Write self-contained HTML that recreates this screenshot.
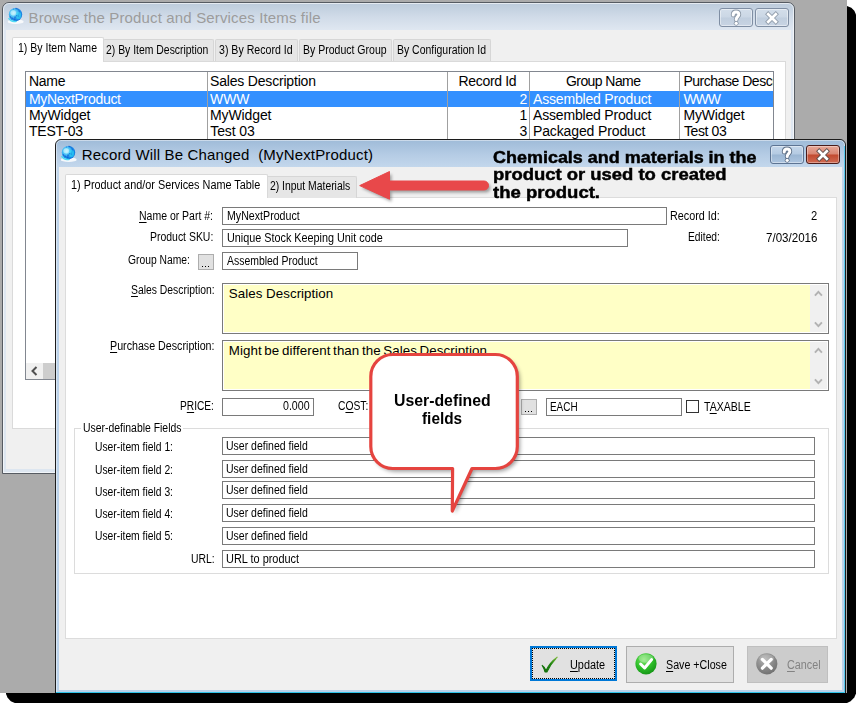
<!DOCTYPE html>
<html>
<head>
<meta charset="utf-8">
<title>Record Will Be Changed</title>
<style>
html,body{margin:0;padding:0;}
body{width:862px;height:709px;overflow:hidden;background:#fff;position:relative;font-family:"Liberation Sans",sans-serif;font-size:11px;color:#000;}
#shadow,#desk,#desk div,#desk svg{position:absolute;box-sizing:border-box;}
#shadow{left:6px;top:6px;width:850px;height:697px;background:#000;clip-path:polygon(0 0,841px 0,845.3px 1.8px,848.3px 4.8px,850px 8.6px,850px 687.5px,848.3px 691.6px,844.6px 695.3px,841px 697px,8.8px 697px,4.8px 695.2px,1.6px 691.8px,0 688px);}
#desk{left:0;top:0;width:847px;height:693px;background:#ababab;overflow:hidden;}
.t{white-space:nowrap;}
.t u{text-decoration:underline;text-underline-offset:1.6px;text-decoration-thickness:1px;}
.tab{background:#e6e6e6;border:1px solid #d6d6d6;border-bottom:none;border-radius:2px 2px 0 0;}
.tab.sel{background:#fff;border-color:#d9d9d9;}
.inp{background:#fff;border:1px solid #7a7a7a;}
.ta{background:#ffffc6;border:1px solid #7a7a7a;box-shadow:inset 0 0 0 1px #fff;}
.dots{background:#e1e1e1;border:1px solid #adadad;}
.btn{background:#e1e1e1;border:1px solid #adadad;}
</style>
</head>
<body>
<div id="shadow"></div>
<div id="desk">

<!-- ===== back window frame ===== -->
<div style="left:2px;top:2px;width:793px;height:472px;border:1px solid #565b62;border-radius:7px 7px 0 0;background:linear-gradient(#bccbdb 0,#d0dbe8 14px,#dfe7f1 27px,#dde6f0 100%);"></div>
<div style="left:3px;top:3px;width:791px;height:470px;border:1px solid rgba(255,255,255,.6);border-radius:6px 6px 0 0;"></div>
<div style="left:6px;top:30px;width:785px;height:439px;background:#f0f0f0;"></div>
<!-- caption buttons (inactive) -->
<div style="left:719px;top:8px;width:34px;height:19px;border:1px solid #7f8ea3;border-radius:3px;background:linear-gradient(#d3deea 0,#cbd7e5 48%,#c0cede 52%,#c8d4e3 100%);box-shadow:inset 0 0 0 1px rgba(255,255,255,.45);"></div>
<div style="left:755px;top:8px;width:34px;height:19px;border:1px solid #7f8ea3;border-radius:3px;background:linear-gradient(#d3deea 0,#cbd7e5 48%,#c0cede 52%,#c8d4e3 100%);box-shadow:inset 0 0 0 1px rgba(255,255,255,.45);"></div>
<svg style="left:6px;top:6px;opacity:0.95" width="20" height="20" viewBox="0 0 20 20">
<defs><radialGradient id="gb" cx="0.36" cy="0.38" r="0.75"><stop offset="0" stop-color="#b8f2ff"/><stop offset="0.35" stop-color="#4cc4f6"/><stop offset="0.7" stop-color="#168cea"/><stop offset="1" stop-color="#0c62d0"/></radialGradient></defs>
<ellipse cx="9.7" cy="15.7" rx="8" ry="2.3" fill="#fff" opacity="0.85"/>
<circle cx="9.5" cy="8.6" r="6.7" fill="url(#gb)"/>
<path d="M9.5 2.2 C13 3 14.5 5.5 13 8 C12 10 10 10 9 12 C8.5 13.5 9.5 14.6 11 15" fill="none" stroke="#0a5ad0" stroke-width="1.3" opacity="0.55"/>
<path d="M4 11 C6 12.5 7.5 13.5 9 13" fill="none" stroke="#0a5ad0" stroke-width="1.2" opacity="0.5"/>
<ellipse cx="12.6" cy="9.6" rx="2.6" ry="3.6" fill="#2fe0f6" opacity="0.55"/>
<ellipse cx="7.2" cy="6.8" rx="2.8" ry="2.6" fill="#d8faff" opacity="0.55"/>
<path d="M2.6 12.2 C4.2 15 7.5 16 10.5 15.2" fill="none" stroke="#38d8f4" stroke-width="1.4" opacity="0.9"/>
<g fill="#0a4ed0" opacity="0.6"><circle cx="4.3" cy="10.7" r="0.6"/><circle cx="6.3" cy="12.2" r="0.65"/><circle cx="8.5" cy="11.1" r="0.6"/><circle cx="10.5" cy="9.5" r="0.6"/><circle cx="12.3" cy="10.1" r="0.55"/><circle cx="8.3" cy="13.5" r="0.55"/><circle cx="7.4" cy="3.0" r="0.6"/><circle cx="10.2" cy="2.7" r="0.6"/></g>
</svg><svg style="left:728px;top:8.5px;" width="16" height="18" viewBox="0 0 16 18">
<path d="M5.2 6.0 C5.2 3.9 6.4 3.0 8.0 3.0 C9.7 3.0 10.8 4.0 10.8 5.5 C10.8 7.5 8.2 7.9 8.2 10.6" fill="none" stroke="#8d99a8" stroke-width="4.8" stroke-linecap="round"/>
<circle cx="8.2" cy="14.3" r="2.4" fill="#8d99a8"/>
<path d="M5.2 6.0 C5.2 3.9 6.4 3.0 8.0 3.0 C9.7 3.0 10.8 4.0 10.8 5.5 C10.8 7.5 8.2 7.9 8.2 10.6" fill="none" stroke="#fff" stroke-width="3.0" stroke-linecap="round"/>
<circle cx="8.2" cy="14.3" r="1.6" fill="#fff"/>
</svg><svg style="left:763px;top:9.5px;" width="18" height="16" viewBox="0 0 18 16">
<path d="M5.2 4.2 L12.8 11.8 M12.8 4.2 L5.2 11.8" fill="none" stroke="#8d99a8" stroke-width="4.4" stroke-linecap="square"/>
<path d="M5.2 4.2 L12.8 11.8 M12.8 4.2 L5.2 11.8" fill="none" stroke="#fff" stroke-width="2.7" stroke-linecap="square"/>
</svg>

<!-- back window tab page -->
<div style="left:12px;top:61px;width:774px;height:368px;background:#fff;border:1px solid #dadada;"></div>
<div class="tab" style="left:103px;top:39px;width:111px;height:22px;"></div>
<div class="tab" style="left:215px;top:39px;width:83px;height:22px;"></div>
<div class="tab" style="left:299px;top:39px;width:93px;height:22px;"></div>
<div class="tab" style="left:393px;top:39px;width:98px;height:22px;"></div>
<div class="tab sel" style="left:12px;top:37px;width:92px;height:25px;"></div>
<div style="left:13px;top:61px;width:90px;height:2px;background:#fff;"></div>

<!-- list -->
<div style="left:25px;top:71px;width:749px;height:309px;background:#fff;border:1px solid #828790;"></div>
<div style="left:26px;top:91px;width:747px;height:16px;background:#3390ff;"></div>
<div style="left:207px;top:72px;width:1px;height:290px;background:#a0a0a0;"></div>
<div style="left:447px;top:72px;width:1px;height:290px;background:#a0a0a0;"></div>
<div style="left:529px;top:72px;width:1px;height:290px;background:#a0a0a0;"></div>
<div style="left:679px;top:72px;width:1px;height:290px;background:#a0a0a0;"></div>
<!-- hscroll -->
<div style="left:26px;top:363px;width:747px;height:16px;background:#f0f0f0;"></div>
<div style="left:43px;top:363px;width:400px;height:16px;background:#cdcdcd;"></div>
<svg style="left:26px;top:362px;" width="17" height="17" viewBox="0 0 17 17"><path d="M10.5 5 L6.5 9 L10.5 13" fill="none" stroke="#505050" stroke-width="2"/></svg>

<div class="t" style="left:28.50px;top:10.30px;font-size:15px;line-height:15px;letter-spacing:0.147px;color:#9c9c9c">Browse the Product and Services Items file</div>
<div class="t" style="left:17.50px;top:41.84px;font-size:12px;line-height:12px;transform:scaleX(0.8775);transform-origin:0 0">1) By Item Name</div>
<div class="t" style="left:106.20px;top:43.84px;font-size:12px;line-height:12px;transform:scaleX(0.8675);transform-origin:0 0">2) By Item Description</div>
<div class="t" style="left:219.40px;top:43.84px;font-size:12px;line-height:12px;transform:scaleX(0.8828);transform-origin:0 0">3) By Record Id</div>
<div class="t" style="left:303.40px;top:43.84px;font-size:12px;line-height:12px;transform:scaleX(0.8764);transform-origin:0 0">By Product Group</div>
<div class="t" style="left:397.40px;top:43.84px;font-size:12px;line-height:12px;transform:scaleX(0.8720);transform-origin:0 0">By Configuration Id</div>
<div class="t" style="left:29.00px;top:73.85px;font-size:14px;line-height:14px;letter-spacing:-0.286px">Name</div>
<div class="t" style="left:210.00px;top:73.85px;font-size:14px;line-height:14px;letter-spacing:-0.184px">Sales Description</div>
<div class="t" style="left:458.60px;top:73.85px;font-size:14px;line-height:14px;letter-spacing:-0.350px">Record Id</div>
<div class="t" style="left:566.00px;top:73.85px;font-size:14px;line-height:14px;letter-spacing:-0.573px">Group Name</div>
<div class="t" style="left:683.40px;top:73.85px;font-size:14px;line-height:14px;letter-spacing:-0.469px;width:89.6px;overflow:hidden">Purchase Descr</div>
<div class="t" style="left:29.00px;top:91.95px;font-size:14px;line-height:14px;letter-spacing:-0.309px;color:#fff">MyNextProduct</div>
<div class="t" style="left:210.00px;top:91.95px;font-size:14px;line-height:14px;letter-spacing:-0.078px;color:#fff">WWW</div>
<div class="t" style="left:519.50px;top:91.95px;font-size:14px;line-height:14px;color:#fff">2</div>
<div class="t" style="left:533.00px;top:91.95px;font-size:14px;line-height:14px;letter-spacing:-0.182px;color:#fff">Assembled Product</div>
<div class="t" style="left:683.40px;top:91.95px;font-size:14px;line-height:14px;letter-spacing:-1.028px;color:#fff">WWW</div>
<div class="t" style="left:29.00px;top:107.95px;font-size:14px;line-height:14px;letter-spacing:-0.105px">MyWidget</div>
<div class="t" style="left:210.00px;top:107.95px;font-size:14px;line-height:14px;letter-spacing:-0.105px">MyWidget</div>
<div class="t" style="left:519.50px;top:107.95px;font-size:14px;line-height:14px">1</div>
<div class="t" style="left:533.00px;top:107.95px;font-size:14px;line-height:14px;letter-spacing:-0.182px">Assembled Product</div>
<div class="t" style="left:683.40px;top:107.95px;font-size:14px;line-height:14px;letter-spacing:-0.148px">MyWidget</div>
<div class="t" style="left:29.00px;top:123.95px;font-size:14px;line-height:14px;letter-spacing:-0.208px">TEST-03</div>
<div class="t" style="left:210.30px;top:123.95px;font-size:14px;line-height:14px;letter-spacing:-0.123px">Test 03</div>
<div class="t" style="left:519.50px;top:123.95px;font-size:14px;line-height:14px">3</div>
<div class="t" style="left:533.00px;top:123.95px;font-size:14px;line-height:14px;letter-spacing:-0.127px">Packaged Product</div>
<div class="t" style="left:684.00px;top:123.95px;font-size:14px;line-height:14px;letter-spacing:-0.390px">Test 03</div>

<!-- ===== front window frame ===== -->
<div style="left:55px;top:139px;width:791px;height:560px;border:1px solid #1c1c1c;border-radius:6px 6px 0 0;background:linear-gradient(#9fbbd8 0,#b4cbe4 14px,#c3d7ec 27px,#bdd3ea 60px,#bbd2ea 100%);"></div>
<div style="left:56px;top:140px;width:789px;height:558px;border:1px solid rgba(255,255,255,.45);border-radius:5px 5px 0 0;"></div>
<div style="left:59px;top:167px;width:783px;height:523px;background:#f0f0f0;"></div>
<div style="left:56px;top:692px;width:789px;height:1px;background:#2fc4ea;"></div>

<div style="left:844px;top:146px;width:1px;height:547px;background:#56c8ee;"></div>
<!-- caption buttons (active) -->
<div style="left:770px;top:145px;width:34px;height:19px;border:1px solid #5d7493;border-radius:3px;background:linear-gradient(#c4d6ea 0,#b4cae2 48%,#9bb6d3 52%,#adc5df 100%);box-shadow:inset 0 0 0 1px rgba(255,255,255,.4);"></div>
<div style="left:806px;top:145px;width:34px;height:19px;border:1px solid #4a1c1a;border-radius:3px;background:linear-gradient(#e7a898 0,#d98672 48%,#c24a2f 52%,#cf6a52 100%);box-shadow:inset 0 0 0 1px rgba(255,255,255,.35);"></div>
<svg style="left:59px;top:144px;opacity:1.0" width="20" height="20" viewBox="0 0 20 20">
<defs><radialGradient id="gf" cx="0.36" cy="0.38" r="0.75"><stop offset="0" stop-color="#b8f2ff"/><stop offset="0.35" stop-color="#4cc4f6"/><stop offset="0.7" stop-color="#168cea"/><stop offset="1" stop-color="#0c62d0"/></radialGradient></defs>
<ellipse cx="9.7" cy="15.7" rx="8" ry="2.3" fill="#fff" opacity="0.85"/>
<circle cx="9.5" cy="8.6" r="6.7" fill="url(#gf)"/>
<path d="M9.5 2.2 C13 3 14.5 5.5 13 8 C12 10 10 10 9 12 C8.5 13.5 9.5 14.6 11 15" fill="none" stroke="#0a5ad0" stroke-width="1.3" opacity="0.55"/>
<path d="M4 11 C6 12.5 7.5 13.5 9 13" fill="none" stroke="#0a5ad0" stroke-width="1.2" opacity="0.5"/>
<ellipse cx="12.6" cy="9.6" rx="2.6" ry="3.6" fill="#2fe0f6" opacity="0.55"/>
<ellipse cx="7.2" cy="6.8" rx="2.8" ry="2.6" fill="#d8faff" opacity="0.55"/>
<path d="M2.6 12.2 C4.2 15 7.5 16 10.5 15.2" fill="none" stroke="#38d8f4" stroke-width="1.4" opacity="0.9"/>
<g fill="#0a4ed0" opacity="0.6"><circle cx="4.3" cy="10.7" r="0.6"/><circle cx="6.3" cy="12.2" r="0.65"/><circle cx="8.5" cy="11.1" r="0.6"/><circle cx="10.5" cy="9.5" r="0.6"/><circle cx="12.3" cy="10.1" r="0.55"/><circle cx="8.3" cy="13.5" r="0.55"/><circle cx="7.4" cy="3.0" r="0.6"/><circle cx="10.2" cy="2.7" r="0.6"/></g>
</svg><svg style="left:778.6px;top:145.7px;" width="16" height="18" viewBox="0 0 16 18">
<path d="M5.2 6.0 C5.2 3.9 6.4 3.0 8.0 3.0 C9.7 3.0 10.8 4.0 10.8 5.5 C10.8 7.5 8.2 7.9 8.2 10.6" fill="none" stroke="#5d6f86" stroke-width="4.8" stroke-linecap="round"/>
<circle cx="8.2" cy="14.3" r="2.4" fill="#5d6f86"/>
<path d="M5.2 6.0 C5.2 3.9 6.4 3.0 8.0 3.0 C9.7 3.0 10.8 4.0 10.8 5.5 C10.8 7.5 8.2 7.9 8.2 10.6" fill="none" stroke="#fff" stroke-width="3.0" stroke-linecap="round"/>
<circle cx="8.2" cy="14.3" r="1.6" fill="#fff"/>
</svg><svg style="left:813.8px;top:146.6px;" width="18" height="16" viewBox="0 0 18 16">
<path d="M5.2 4.2 L12.8 11.8 M12.8 4.2 L5.2 11.8" fill="none" stroke="#5a4a48" stroke-width="4.4" stroke-linecap="square"/>
<path d="M5.2 4.2 L12.8 11.8 M12.8 4.2 L5.2 11.8" fill="none" stroke="#fff" stroke-width="2.7" stroke-linecap="square"/>
</svg>

<!-- front tab page -->
<div style="left:65px;top:197px;width:772px;height:442px;background:#fff;border:1px solid #dcdcdc;"></div>
<div class="tab" style="left:266px;top:176px;width:91px;height:22px;"></div>
<div class="tab sel" style="left:65px;top:174px;width:203px;height:24px;"></div>
<div style="left:66px;top:197px;width:201px;height:2px;background:#fff;"></div>

<!-- inputs -->
<div class="inp" style="left:222px;top:207px;width:445px;height:18px;"></div>
<div class="inp" style="left:222px;top:229px;width:406px;height:18px;"></div>
<div class="inp" style="left:222px;top:252px;width:136px;height:18px;"></div>
<div class="dots" style="left:198px;top:254px;width:16px;height:16px;"></div>
<div style="left:202px;top:266px;width:1px;height:1px;background:#000;box-shadow:3px 0 0 #000,6px 0 0 #000;"></div>
<div class="ta" style="left:222px;top:283px;width:607px;height:51px;"></div>
<div class="ta" style="left:222px;top:340px;width:607px;height:51px;"></div>
<div style="left:810px;top:285px;width:17px;height:47px;background:#f0f0f0;"></div>
<div style="left:810px;top:342px;width:17px;height:47px;background:#f0f0f0;"></div>
<svg style="left:810px;top:285px;" width="17" height="47" viewBox="0 0 17 47"><path d="M4.9 10.7 L8.4 6.9 L11.9 10.7 M4.9 37.3 L8.4 41.1 L11.9 37.3" fill="none" stroke="#b2b2b2" stroke-width="1.9"/></svg>
<svg style="left:810px;top:342px;" width="17" height="47" viewBox="0 0 17 47"><path d="M4.9 10.7 L8.4 6.9 L11.9 10.7 M4.9 37.3 L8.4 41.1 L11.9 37.3" fill="none" stroke="#b2b2b2" stroke-width="1.9"/></svg>
<div class="inp" style="left:222px;top:398px;width:92px;height:18px;"></div>
<div class="dots" style="left:521px;top:399px;width:16px;height:16px;"></div>
<div style="left:525px;top:411px;width:1px;height:1px;background:#000;box-shadow:3px 0 0 #000,6px 0 0 #000;"></div>
<div class="inp" style="left:546px;top:398px;width:136px;height:18px;"></div>
<div style="left:686px;top:400px;width:13px;height:13px;background:#fff;border:1px solid #333;"></div>
<!-- groupbox -->
<div style="left:74px;top:428px;width:755px;height:146px;border:1px solid #dcdcdc;"></div>
<div style="left:81px;top:424px;width:102px;height:10px;background:#fff;"></div>
<div class="inp" style="left:222px;top:437px;width:593px;height:18px;"></div>
<div class="inp" style="left:222px;top:460px;width:593px;height:18px;"></div>
<div class="inp" style="left:222px;top:481px;width:593px;height:18px;"></div>
<div class="inp" style="left:222px;top:504px;width:593px;height:18px;"></div>
<div class="inp" style="left:222px;top:527px;width:593px;height:18px;"></div>
<div class="inp" style="left:222px;top:550px;width:593px;height:18px;"></div>
<!-- buttons -->
<div style="left:530px;top:646px;width:87px;height:35px;background:#e1e1e1;border:2px solid #0078d7;"></div>
<div style="left:532px;top:648px;width:83px;height:31px;border:1px dotted #000;"></div>
<div class="btn" style="left:626px;top:646px;width:108px;height:37px;"></div>
<div style="left:747px;top:646px;width:81px;height:37px;background:#cccccc;border:1px solid #bfbfbf;"></div>
<svg style="left:536px;top:652px;" width="28" height="24" viewBox="0 0 28 24"><defs><linearGradient id="ck" x1="0" y1="1" x2="1" y2="0"><stop offset="0" stop-color="#0e6a08"/><stop offset="0.55" stop-color="#1f8410"/><stop offset="1" stop-color="#7cb83a"/></linearGradient></defs><path d="M6.2 13.4 C8.2 14.6 9.2 16.2 10.0 18.6 C12.6 13 16.4 8.6 21.2 5.2 C16.8 9.8 13.6 14.2 10.9 20.0 L9.0 20.0 C8.4 17.2 7.4 15.2 6.2 13.4 Z" fill="url(#ck)" stroke="url(#ck)" stroke-width="1.1" stroke-linejoin="round"/></svg><svg style="left:634px;top:652px;" width="24" height="24" viewBox="0 0 24 24">
<defs><radialGradient id="gg" cx="0.4" cy="0.3" r="0.8"><stop offset="0" stop-color="#7fe66a"/><stop offset="0.5" stop-color="#2fc02a"/><stop offset="1" stop-color="#0f8a12"/></radialGradient></defs>
<circle cx="12" cy="11.8" r="10.6" fill="url(#gg)"/>
<ellipse cx="12" cy="6.5" rx="7.5" ry="4.2" fill="#fff" opacity="0.28"/>
<path d="M6.6 12 L10.6 16 L17.6 7.6" fill="none" stroke="#fff" stroke-width="3" stroke-linecap="round" stroke-linejoin="round"/></svg><svg style="left:755px;top:652px;" width="24" height="24" viewBox="0 0 24 24">
<defs><radialGradient id="gx" cx="0.4" cy="0.3" r="0.8"><stop offset="0" stop-color="#b4b4b4"/><stop offset="0.5" stop-color="#8c8c8c"/><stop offset="1" stop-color="#6a6a6a"/></radialGradient></defs>
<circle cx="11.8" cy="11.8" r="10.6" fill="url(#gx)"/>
<ellipse cx="11.8" cy="6.5" rx="7.5" ry="4.2" fill="#fff" opacity="0.18"/>
<path d="M7.4 7.4 L16.2 16.2 M16.2 7.4 L7.4 16.2" fill="none" stroke="#fff" stroke-width="3.2" stroke-linecap="round"/></svg>

<div class="t" style="left:81.80px;top:147.30px;font-size:15px;line-height:15px;letter-spacing:0.160px">Record Will Be Changed &nbsp;(MyNextProduct)</div>
<div class="t" style="left:70.70px;top:178.84px;font-size:12px;line-height:12px;transform:scaleX(0.9048);transform-origin:0 0">1) Product and/or Services Name Table</div>
<div class="t" style="left:270.30px;top:180.44px;font-size:12px;line-height:12px;transform:scaleX(0.8650);transform-origin:0 0">2) Input Materials</div>
<div class="t" style="left:139.10px;top:209.84px;font-size:12px;line-height:12px;transform:scaleX(0.8736);transform-origin:0 0"><u>N</u>ame or Part #:</div>
<div class="t" style="left:149.80px;top:231.34px;font-size:12px;line-height:12px;transform:scaleX(0.8707);transform-origin:0 0">Product SKU:</div>
<div class="t" style="left:127.60px;top:253.84px;font-size:12px;line-height:12px;transform:scaleX(0.8580);transform-origin:0 0">Group Name:</div>
<div class="t" style="left:226.50px;top:209.84px;font-size:12px;line-height:12px;transform:scaleX(0.8862);transform-origin:0 0">MyNextProduct</div>
<div class="t" style="left:226.50px;top:231.84px;font-size:12px;line-height:12px;transform:scaleX(0.9011);transform-origin:0 0">Unique Stock Keeping Unit code</div>
<div class="t" style="left:226.50px;top:254.84px;font-size:12px;line-height:12px;transform:scaleX(0.8706);transform-origin:0 0">Assembled Product</div>
<div class="t" style="left:670.20px;top:209.74px;font-size:12px;line-height:12px;transform:scaleX(0.8996);transform-origin:0 0">Record Id:</div>
<div class="t" style="left:811.28px;top:209.54px;font-size:12px;line-height:12px;transform:scaleX(0.9300);transform-origin:0 0">2</div>
<div class="t" style="left:688.40px;top:231.34px;font-size:12px;line-height:12px;transform:scaleX(0.8539);transform-origin:0 0">Edited:</div>
<div class="t" style="left:766.00px;top:232.04px;font-size:12px;line-height:12px;transform:scaleX(0.9646);transform-origin:0 0">7/03/2016</div>
<div class="t" style="left:130.60px;top:283.54px;font-size:12px;line-height:12px;transform:scaleX(0.8644);transform-origin:0 0"><u>S</u>ales Description:</div>
<div class="t" style="left:109.70px;top:340.24px;font-size:12px;line-height:12px;transform:scaleX(0.8902);transform-origin:0 0"><u>P</u>urchase Description:</div>
<div class="t" style="left:228.80px;top:287.02px;font-size:13.33px;line-height:13.33px;letter-spacing:0.043px">Sales Description</div>
<div class="t" style="left:228.80px;top:343.92px;font-size:13.33px;line-height:13.33px;letter-spacing:0.077px;word-spacing:-1.2px">Might be different than the Sales Description</div>
<div class="t" style="left:179.60px;top:399.84px;font-size:12px;line-height:12px;transform:scaleX(0.8472);transform-origin:0 0">P<u>R</u>ICE:</div>
<div class="t" style="left:283.40px;top:399.84px;font-size:12px;line-height:12px;transform:scaleX(0.8857);transform-origin:0 0">0.000</div>
<div class="t" style="left:337.70px;top:399.84px;font-size:12px;line-height:12px;transform:scaleX(0.8573);transform-origin:0 0">C<u>O</u>ST:</div>
<div class="t" style="left:550.40px;top:400.84px;font-size:12px;line-height:12px;transform:scaleX(0.8277);transform-origin:0 0">EACH</div>
<div class="t" style="left:703.80px;top:400.64px;font-size:12px;line-height:12px;transform:scaleX(0.8788);transform-origin:0 0">T<u>A</u>XABLE</div>
<div class="t" style="left:83.30px;top:422.04px;font-size:12px;line-height:12px;transform:scaleX(0.8687);transform-origin:0 0">User-definable Fields</div>
<div class="t" style="left:94.80px;top:441.34px;font-size:12px;line-height:12px;transform:scaleX(0.8599);transform-origin:0 0">User-item field 1:</div>
<div class="t" style="left:226.40px;top:440.34px;font-size:12px;line-height:12px;transform:scaleX(0.8759);transform-origin:0 0">User defined field</div>
<div class="t" style="left:94.80px;top:463.94px;font-size:12px;line-height:12px;transform:scaleX(0.8599);transform-origin:0 0">User-item field 2:</div>
<div class="t" style="left:226.40px;top:462.94px;font-size:12px;line-height:12px;transform:scaleX(0.8759);transform-origin:0 0">User defined field</div>
<div class="t" style="left:94.80px;top:485.64px;font-size:12px;line-height:12px;transform:scaleX(0.8599);transform-origin:0 0">User-item field 3:</div>
<div class="t" style="left:226.40px;top:484.44px;font-size:12px;line-height:12px;transform:scaleX(0.8759);transform-origin:0 0">User defined field</div>
<div class="t" style="left:94.80px;top:508.34px;font-size:12px;line-height:12px;transform:scaleX(0.8599);transform-origin:0 0">User-item field 4:</div>
<div class="t" style="left:226.40px;top:507.34px;font-size:12px;line-height:12px;transform:scaleX(0.8759);transform-origin:0 0">User defined field</div>
<div class="t" style="left:94.80px;top:530.44px;font-size:12px;line-height:12px;transform:scaleX(0.8599);transform-origin:0 0">User-item field 5:</div>
<div class="t" style="left:226.40px;top:529.64px;font-size:12px;line-height:12px;transform:scaleX(0.8759);transform-origin:0 0">User defined field</div>
<div class="t" style="left:190.50px;top:552.84px;font-size:12px;line-height:12px;transform:scaleX(0.8667);transform-origin:0 0">URL:</div>
<div class="t" style="left:226.40px;top:552.84px;font-size:12px;line-height:12px;transform:scaleX(0.9107);transform-origin:0 0">URL to product</div>
<div class="t" style="left:570.30px;top:658.64px;font-size:12px;line-height:12px;transform:scaleX(0.9069);transform-origin:0 0"><u>U</u>pdate</div>
<div class="t" style="left:665.50px;top:658.74px;font-size:12px;line-height:12px;transform:scaleX(0.8907);transform-origin:0 0"><u>S</u>ave +Close</div>
<div class="t" style="left:786.80px;top:658.74px;font-size:12px;line-height:12px;color:#838383;transform:scaleX(0.8994);transform-origin:0 0"><u>C</u>ancel</div>
<div class="t" style="left:493.40px;top:149.56px;font-size:16px;line-height:16px;font-weight:bold;transform:scaleX(1.1225);transform-origin:0 0;-webkit-text-stroke:0.45px #000">Chemicals and materials in the</div>
<div class="t" style="left:493.40px;top:167.46px;font-size:16px;line-height:16px;font-weight:bold;transform:scaleX(1.1524);transform-origin:0 0;-webkit-text-stroke:0.45px #000">product or used to created</div>
<div class="t" style="left:493.40px;top:184.96px;font-size:16px;line-height:16px;font-weight:bold;transform:scaleX(1.1575);transform-origin:0 0;-webkit-text-stroke:0.45px #000">the product.</div>

<svg style="left:0;top:0;overflow:visible" width="847" height="693" viewBox="0 0 847 693">
<defs><filter id="ash" x="-10%" y="-30%" width="130%" height="180%"><feGaussianBlur stdDeviation="1.6"/></filter></defs>
<path d="M359.7 185.6 L389.5 171.5 L389.5 181 L484 181 A4.5 4.5 0 0 1 484 190 L389.5 190 L389.5 199.2 Z" transform="translate(2,2.5)" fill="#000" opacity="0.35" filter="url(#ash)"/>
<path d="M359.7 185.6 L389.5 171.5 L389.5 181 L484 181 A4.5 4.5 0 0 1 484 190 L389.5 190 L389.5 199.2 Z" fill="#e8484a" stroke="#e8484a" stroke-width="1" stroke-linejoin="round"/>
</svg>
<svg style="left:0;top:0;overflow:visible" width="847" height="693" viewBox="0 0 847 693">
<defs><filter id="csh" x="-20%" y="-20%" width="150%" height="150%"><feGaussianBlur stdDeviation="2.2"/></filter></defs>
<path d="M392.8 354.5 L495.3 354.5 A22 22 0 0 1 517.3 376.5 L517.3 446.5 A22 22 0 0 1 495.3 468.5 L472 468.5 L452.3 511 L452.6 468.5 L392.8 468.5 A22 22 0 0 1 370.8 446.5 L370.8 376.5 A22 22 0 0 1 392.8 354.5 Z" transform="translate(2.5,3)" fill="#000" opacity="0.4" filter="url(#csh)"/>
<path d="M392.8 354.5 L495.3 354.5 A22 22 0 0 1 517.3 376.5 L517.3 446.5 A22 22 0 0 1 495.3 468.5 L472 468.5 L452.3 511 L452.6 468.5 L392.8 468.5 A22 22 0 0 1 370.8 446.5 L370.8 376.5 A22 22 0 0 1 392.8 354.5 Z" fill="#fff" stroke="#e5443f" stroke-width="3.2" stroke-linejoin="round"/>
</svg>
<div class="t" style="left:393.70px;top:393.16px;font-size:16px;line-height:16px;font-weight:bold;transform:scaleX(0.9888);transform-origin:0 0">User-defined</div>
<div class="t" style="left:422.30px;top:411.46px;font-size:16px;line-height:16px;font-weight:bold;transform:scaleX(0.9594);transform-origin:0 0">fields</div>

</div>
</body>
</html>
